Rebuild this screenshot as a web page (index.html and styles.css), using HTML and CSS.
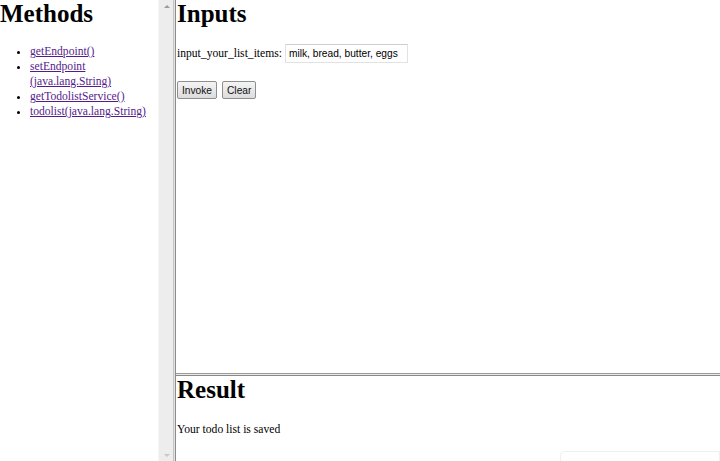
FILE: index.html
```html
<!DOCTYPE html>
<html>
<head>
<meta charset="utf-8">
<link rel="stylesheet" href="styles.css">
</head>
<body>
<div class="frames">
  <div class="left">
    <div class="left-content">
      <h1 class="title">Methods</h1>
      <ul class="methods">
        <li><a href="#">getEndpoint()</a></li>
        <li><a href="#">setEndpoint<br>(java.lang.String)</a></li>
        <li><a href="#">getTodolistService()</a></li>
        <li><a href="#">todolist(java.lang.String)</a></li>
      </ul>
    </div>
    <div class="scrollbar">
      <span class="arrow up"></span>
      <span class="arrow down"></span>
    </div>
  </div>
  <div class="vsep"></div>
  <div class="right">
    <div class="top">
      <h1 class="title">Inputs</h1>
      <div class="field">
        <span class="label">input_your_list_items:</span>
        <input class="text" type="text" value="milk, bread, butter, eggs">
      </div>
      <div class="buttons">
        <button class="btn">Invoke</button>
        <button class="btn">Clear</button>
      </div>
    </div>
    <div class="hsep"></div>
    <div class="bottom">
      <h1 class="title">Result</h1>
      <p class="result">Your todo list is saved</p>
      <div class="ghost"></div>
    </div>
  </div>
</div>
</body>
</html>
```
FILE: styles.css
```css
html, body {
  margin: 0;
  padding: 0;
  height: 100%;
  background: #fff;
  overflow: hidden;
}
body {
  font-family: "Liberation Serif", "Times New Roman", serif;
  font-size: 11.6px;
  color: #000;
}
.frames {
  display: flex;
  height: 461px;
  width: 720px;
}
.left {
  width: 173px;
  display: flex;
  flex-shrink: 0;
}
.left-content {
  width: 158px;
  flex-shrink: 0;
}
.scrollbar {
  width: 15px;
  background: #ededed;
  border-left: 1px solid #f6f6f6;
  position: relative;
}
.arrow {
  position: absolute;
  left: 5px;
  width: 0;
  height: 0;
  border-left: 3px solid transparent;
  border-right: 3px solid transparent;
}
.arrow.up {
  top: 5px;
  border-bottom: 3px solid #9a9a9a;
}
.arrow.down {
  bottom: 4px;
  border-top: 3px solid #c8c8c8;
}
.vsep {
  width: 3px;
  flex-shrink: 0;
  background: #e4e4e4;
  border-left: 1px solid #c4c4c4;
  border-right: 1px solid #8c8c8c;
  box-sizing: border-box;
}
.right {
  flex: 1;
  display: flex;
  flex-direction: column;
}
.top {
  height: 373px;
  padding-left: 1px;
}
.hsep {
  height: 3px;
  background: #e8e8e8;
  border-top: 1px solid #9a9a9a;
  border-bottom: 1px solid #8a8a8a;
  box-sizing: border-box;
}
.bottom {
  flex: 1;
  padding-left: 1px;
  position: relative;
}
.title {
  font-size: 25px;
  font-weight: bold;
  margin: 0;
  line-height: 28px;
}
.methods {
  margin: 16px 0 0 0;
  padding-left: 30px;
  line-height: 15px;
}
.methods a {
  color: #551a8b;
  text-decoration: underline;
}
.field {
  margin-top: 16px;
  display: flex;
  align-items: center;
  gap: 3px;
}
.text {
  font-family: "Liberation Sans", Arial, sans-serif;
  font-size: 10.2px;
  width: 123px;
  height: 19px;
  padding: 0 3px;
  border: 1px solid #e2e2e2;
  border-top-color: #cfcfcf;
  box-sizing: border-box;
  margin: 0;
  color: #000;
}
.buttons {
  margin-top: 18px;
  display: flex;
  gap: 5px;
}
.btn {
  font-family: "Liberation Sans", Arial, sans-serif;
  font-size: 10.2px;
  height: 18px;
  padding: 0 4px;
  margin: 0;
  border: 1px solid #8e8e8e;
  border-radius: 2px;
  background: linear-gradient(#f4f4f4, #dcdcdc);
  color: #111;
}
.result {
  margin: 19px 0 0 0;
}
.ghost {
  position: absolute;
  left: 384px;
  right: 0;
  bottom: -4px;
  height: 12px;
  border: 1px solid #efefef;
  border-radius: 4px 0 0 0;
}
```
